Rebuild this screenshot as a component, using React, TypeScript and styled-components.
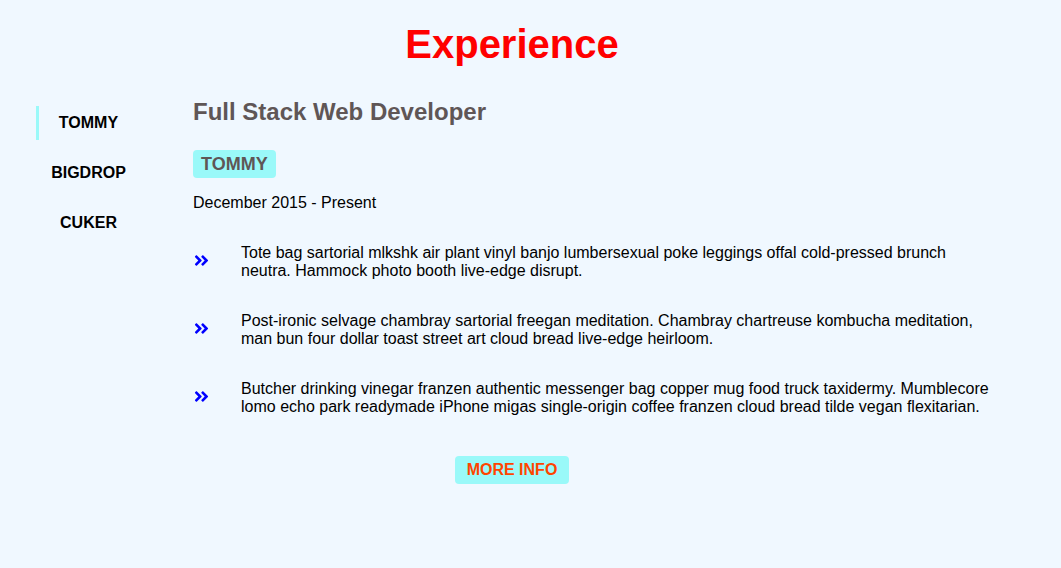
import React, { useState } from "react";
import styled, { createGlobalStyle } from "styled-components";
import { FaAngleDoubleRight } from "react-icons/fa";

const GlobalStyle = createGlobalStyle`
  html, body {
    margin: 0;
    padding: 0;
    background: #f0f8ff;
    font-family: "Liberation Sans", Arial, sans-serif;
    color: #000;
  }
`;

const CYAN = "#9af9f9";
const GREYBROWN = "#5f5656";

const Page = styled.div`
  width: 1024px;
  padding-top: 21px;
  min-height: 547px;
`;

const Title = styled.h1`
  margin: 0;
  font-size: 40px;
  line-height: 46px;
  font-weight: 700;
  color: #ff0000;
  text-align: center;
`;

const Section = styled.div`
  display: flex;
  align-items: flex-start;
  margin-top: 31px;
`;

const Tabs = styled.div`
  display: flex;
  flex-direction: column;
  gap: 16px;
  padding: 8px 0 0 36px;
  width: 102px;
  margin-right: 3px;
  flex-shrink: 0;
`;

const Tab = styled.button<{ $active: boolean }>`
  appearance: none;
  background: transparent;
  border: 0;
  border-left: 3px solid ${(p) => (p.$active ? CYAN : "transparent")};
  height: 34px;
  padding: 0;
  font-family: inherit;
  font-size: 16px;
  font-weight: 700;
  line-height: 34px;
  color: #000;
  text-align: center;
  cursor: pointer;
`;

const Content = styled.div`
  margin-left: 52px;
  width: 802px;
`;

const JobTitle = styled.h2`
  margin: 0;
  font-size: 24px;
  line-height: 28px;
  font-weight: 700;
  color: ${GREYBROWN};
`;

const Company = styled.div`
  display: inline-block;
  margin-top: 24px;
  padding: 0 8px;
  background: ${CYAN};
  border-radius: 4px;
  font-size: 18px;
  font-weight: 700;
  line-height: 28px;
  color: ${GREYBROWN};
`;

const Dates = styled.p`
  margin: 16px 0 0;
  font-size: 16px;
  line-height: 18px;
`;

const Duties = styled.div`
  display: flex;
  flex-direction: column;
  gap: 32px;
  margin-top: 32px;
`;

const Duty = styled.div`
  display: flex;
  align-items: center;
`;

const Icon = styled.span`
  display: flex;
  width: 48px;
  flex-shrink: 0;
  color: #0000ff;
  margin-top: -3px;
`;

const DutyText = styled.p`
  margin: 0;
  font-size: 16px;
  line-height: 18px;
`;

const Footer = styled.div`
  display: flex;
  justify-content: center;
  margin-top: 40px;
`;

const MoreButton = styled.button`
  appearance: none;
  border: 0;
  background: ${CYAN};
  border-radius: 4px;
  padding: 0 12px;
  font-family: inherit;
  font-size: 16px;
  font-weight: 700;
  line-height: 28px;
  color: #ff4500;
  cursor: pointer;
`;

const jobs = [
  {
    company: "TOMMY",
    title: "Full Stack Web Developer",
    dates: "December 2015 - Present",
    duties: [
      "Tote bag sartorial mlkshk air plant vinyl banjo lumbersexual poke leggings offal cold-pressed brunch neutra. Hammock photo booth live-edge disrupt.",
      "Post-ironic selvage chambray sartorial freegan meditation. Chambray chartreuse kombucha meditation, man bun four dollar toast street art cloud bread live-edge heirloom.",
      "Butcher drinking vinegar franzen authentic messenger bag copper mug food truck taxidermy. Mumblecore lomo echo park readymade iPhone migas single-origin coffee franzen cloud bread tilde vegan flexitarian.",
    ],
  },
  { company: "BIGDROP", title: "Front-End Engineer", dates: "May 2015 - December 2015", duties: [] },
  { company: "CUKER", title: "Engineering Intern", dates: "May 2014 - September 2015", duties: [] },
];

export default function App() {
  const [active, setActive] = useState(0);
  const job = jobs[active];
  return (
    <Page>
      <GlobalStyle />
      <Title>Experience</Title>
      <Section>
        <Tabs>
          {jobs.map((j, i) => (
            <Tab key={j.company} $active={i === active} onClick={() => setActive(i)}>
              {j.company}
            </Tab>
          ))}
        </Tabs>
        <Content>
          <JobTitle>{job.title}</JobTitle>
          <Company>{job.company}</Company>
          <Dates>{job.dates}</Dates>
          <Duties>
            {job.duties.map((d) => (
              <Duty key={d}>
                <Icon>
                  <FaAngleDoubleRight size={17} />
                </Icon>
                <DutyText>{d}</DutyText>
              </Duty>
            ))}
          </Duties>
        </Content>
      </Section>
      <Footer>
        <MoreButton>MORE INFO</MoreButton>
      </Footer>
    </Page>
  );
}
